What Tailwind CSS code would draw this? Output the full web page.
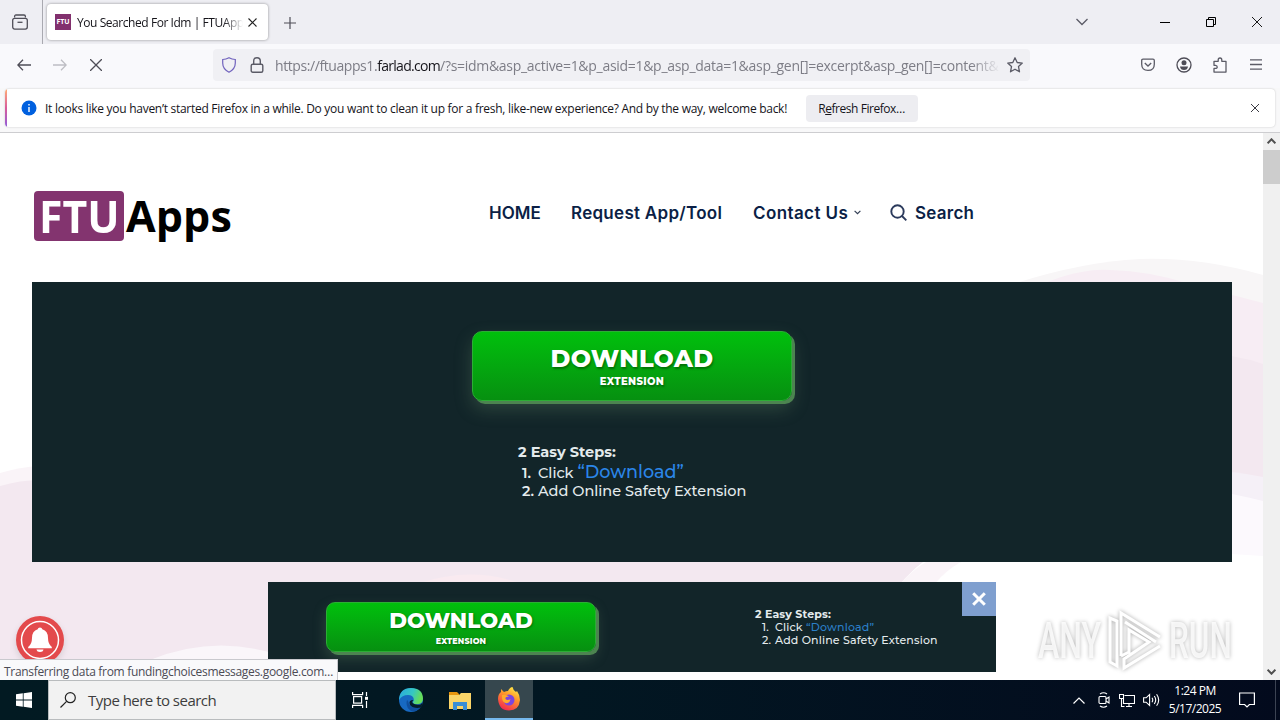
<!DOCTYPE html>
<html lang="en">
<head>
<meta charset="utf-8">
<title>You Searched For Idm | FTUApps</title>
<script src="https://cdn.jsdelivr.net/npm/@tailwindcss/browser@4"></script>
</head>
<body class="w-[1280px] h-[720px] overflow-hidden flex flex-col bg-white font-['Open_Sans','Noto_Sans',sans-serif] whitespace-nowrap">

<!-- Tab strip -->
<div class="h-11 shrink-0 bg-[#eeeef3] flex items-center text-[#15141a]">
  <div class="w-[43px] h-11 border-r border-[#a9a9b0] flex items-center pl-3">
    <svg class="w-4 h-4" viewBox="0 0 16 16" fill="none" stroke="#4e4d57" stroke-width="1.3"><path d="M2.6 3.6V2.4Q2.6 1 4 1h8q1.400 0 1.400 1.400v1.200" /><rect x=".7" y="4.300" width="14.600" height="10.800" rx="2"/><path d="M5.500 8.300h5"/></svg>
  </div>
  <div class="ml-1 w-[221px] h-9 rounded bg-white shadow-[0_0_3px_rgba(0,0,0,0.4)] flex items-center pl-2">
    <div class="w-4 h-4 bg-[#82306e] text-white text-[7px] font-bold flex items-center justify-center">FTU</div>
    <div class="ml-1.5 w-[166px] overflow-hidden pt-0.5 text-xs tracking-[-0.44px] mask-r-from-88%">You Searched For Idm | FTUApp</div>
    <svg class="w-[9px] h-[9px] ml-[5px]" viewBox="0 0 9 9" stroke="#222" stroke-width="1.100"><path d="M.5 .5l8 8M8.500 .5l-8 8"/></svg>
  </div>
  <svg class="w-3 h-3 ml-4 mt-px" viewBox="0 0 12 12" stroke="#4e4d57" stroke-width="1.200"><path d="M6 0v12M0 6h12"/></svg>
  <div class="flex-1"></div>
  <svg class="w-3 h-2 mr-[72px]" viewBox="0 0 12 8" fill="none" stroke="#5b5b66" stroke-width="1.300"><path d="M.5 1L6 6.500 11.500 1"/></svg>
  <div class="w-2.5 h-px bg-black mr-9"></div>
  <svg class="w-2.5 h-2.5 mr-9" viewBox="0 0 10 10" fill="none" stroke="#000" stroke-width="1"><path d="M.5 2.500h7v7h-7zM2.500 2.500v-2h7v7h-2"/></svg>
  <svg class="w-2.5 h-2.5 mr-[18px]" viewBox="0 0 10 10" stroke="#000" stroke-width=".9"><path d="M0 0l10 10M10 0L0 10"/></svg>
</div>

<!-- Navigation toolbar -->
<div class="h-11 shrink-0 bg-[#f9f9fc] flex items-center pb-[3px]">
  <svg class="w-3.5 h-3 ml-[17px]" viewBox="0 0 14 12" fill="none" stroke="#4e4d57" stroke-width="1.300"><path d="M14 6H1M6 .8L.8 6 6 11.200"/></svg>
  <svg class="w-3.5 h-3 ml-[22px]" viewBox="0 0 14 12" fill="none" stroke="#bdbdc3" stroke-width="1.300"><path d="M0 6h13M8 .8L13.200 6 8 11.200"/></svg>
  <svg class="w-3 h-3 ml-[23px]" viewBox="0 0 12 12" stroke="#4e4d57" stroke-width="1.300"><path d="M0 0l12 12M12 0L0 12"/></svg>
  <div class="ml-[111px] w-[817px] h-8 rounded-sm bg-[#f0f0f4] flex items-center">
    <svg class="w-4 h-4 ml-2" viewBox="0 0 16 16" fill="none" stroke="#7062bd" stroke-width="1.200"><path d="M8 .8q3 1.700 6.300 1.700V6q0 6-6.300 9.200Q1.700 12 1.700 6V2.500Q5 2.500 8 .8z"/></svg>
    <svg class="w-3.5 h-4 ml-[13px]" viewBox="0 0 14 16" fill="none" stroke="#5b5b66" stroke-width="1.400"><rect x="1.200" y="7.300" width="11.600" height="8" rx="1.500"/><path d="M3.700 7V4q0-3.300 3.300-3.300T10.300 4v3"/></svg>
    <div class="ml-[11px] w-[725px] overflow-hidden pt-0.5 text-sm leading-6 text-[#7d7d86] tracking-[-0.290px] mask-r-from-96%"><span class="tracking-[-0.420px]">https://ftuapps1.</span><span class="text-[#15141a] tracking-[-0.700px]">farlad.com</span>/?s=idm&amp;asp_active=1&amp;p_asid=1&amp;p_asp_data=1&amp;asp_gen[]=excerpt&amp;asp_gen[]=content&amp;</div>
    <svg class="w-4 h-4 ml-[7px]" viewBox="0 0 16 16" fill="none" stroke="#5b5b66" stroke-width="1.300" stroke-linejoin="round"><path d="M8 .8l2.200 4.700 5.100.6-3.800 3.500 1 5.200L8 12.200l-4.500 2.600 1-5.200L.7 6.100l5.100-.6z"/></svg>
  </div>
  <svg class="w-3.5 h-3.5 ml-[111px]" viewBox="0 0 14 14" fill="none" stroke="#5b5b66" stroke-width="1.300"><path d="M2 1.200h10q1.300 0 1.300 1.300v3.700Q13.300 12.400 7 12.400T.7 6.200V2.500Q.7 1.200 2 1.200z"/><path d="M3.800 5L7 8l3.200-3"/></svg>
  <svg class="w-4 h-4 ml-[21px]" viewBox="0 0 16 16" fill="none" stroke="#4e4d57" stroke-width="1.300"><circle cx="8" cy="8" r="7"/><circle cx="8" cy="5.800" r="2.500" fill="#4e4d57" stroke="none"/><path d="M4 9.500h8Q11.500 13 8 13T4 9.500z" fill="#4e4d57" stroke="none"/></svg>
  <svg class="w-4 h-4 ml-5" viewBox="0 0 16 16" fill="none" stroke="#5b5b66" stroke-width="1.300" stroke-linejoin="round"><path d="M2 4.300h4.200V3q0-2 1.800-2T9.800 3v1.300H14v10.800H2v-3.700h1.500q1.700 0 1.700-1.500T3.500 8.300H2z"/></svg>
  <svg class="w-3 h-3 ml-[22px]" viewBox="0 0 12 12" stroke="#5b5b66" stroke-width="1.300"><path d="M0 .8h12M0 5.500h12M0 10.200h12"/></svg>
</div>

<!-- Notification bar -->
<div class="h-[45px] shrink-0 bg-[#f8f8f9] border-b border-[#cdcdd0] pl-[5px] pr-[5px] pt-px pb-[5px] flex">
  <div class="w-full h-[38px] rounded bg-white shadow-[0_0_2px_rgba(0,0,0,0.22)] flex items-center text-[#15141a] text-xs overflow-hidden">
    <div class="w-0.5 h-full bg-linear-to-b from-[#ffab70] via-[#d85a9a] to-[#9059d8]"></div>
    <svg class="w-4 h-4 ml-3.5" viewBox="0 0 16 16"><circle cx="8" cy="8" r="7.500" fill="#0060df"/><path d="M8 7v5M8 4v1.600" stroke="#fff" stroke-width="1.400"/></svg>
    <div class="ml-2 w-[761px] pt-0.5 tracking-[-0.282px]">It looks like you haven’t started Firefox in a while. Do you want to clean it up for a fresh, like-new experience? And by the way, welcome back!</div>
    <div class="w-[112px] h-[27px] rounded bg-[#ededf1] flex items-center justify-center pt-0.5 pr-px tracking-[-0.45px]"><span>R<u>e</u>fresh Firefox…</span></div>
    <div class="flex-1"></div>
    <svg class="w-2 h-2 mr-4" viewBox="0 0 8 8" stroke="#3b3b43" stroke-width="1"><path d="M0 0l8 8M8 0L0 8"/></svg>
  </div>
</div>

<!-- Page viewport -->
<div class="relative h-[547px] shrink-0 flex overflow-hidden">
  <main class="relative w-[1263px] h-full bg-white px-8 overflow-hidden">
    <svg class="absolute left-0 top-0 w-[1263px] h-[547px]" viewBox="0 133 1263 547">
      <path d="M1010 285Q1080 262 1140 259Q1200 257 1263 275V550H1010z" fill="#f8f6f7"/>
      <path d="M1040 285Q1080 268 1110 270Q1150 271 1190 284L1263 303V500H1040z" fill="#f7edf4"/>
      <path d="M1200 353Q1235 354 1263 364V490H1200z" fill="#f3e8f0"/>
      <path d="M1200 470Q1235 471 1263 477V550H1200z" fill="#f5f0f7"/>
      <path d="M1200 488Q1235 494 1263 501V556L1200 552z" fill="#fcf9fd"/>
      <path d="M1200 552L1263 558V570H1200z" fill="#fff"/>
      <path d="M0 473Q20 467 40 466V680H0z" fill="#faf4f8"/>
      <path d="M0 486Q20 480 40 480V550H940Q915 565 895 590H500L268 652Q215 640 150 660L110 680H0z" fill="#f3e8f0"/>
      <path d="M150 660Q210 636 268 652V680H110z" fill="#faf6fa"/>
      <path d="M420 583q50-17 100 0z" fill="#f9eaf0"/>
      <path d="M895 590Q915 565 940 555H980Q950 562 930 590z" fill="#faf4f8"/>
    </svg>

    <header class="relative h-[149px] flex items-center pt-[17px]">
      <div class="ml-0.5 w-[455px] flex items-center font-['Open_Sans'] font-bold">
        <div class="w-[90px] h-[50px] rounded bg-[#83346f] text-white text-[45px] leading-[50px] flex justify-center"><span class="scale-x-95">FTU</span></div>
        <div class="ml-0.5 text-black text-[43px] leading-[50px]"><span class="tracking-[0.100px]">Apps</span></div>
      </div>
      <nav class="flex items-center -mt-[7px] font-['Inter'] font-semibold text-[17px] leading-6 text-[#0b1f46]">
        <a class="w-[82px]">HOME</a>
        <a class="w-[182px] tracking-[0.280px]">Request App/Tool</a>
        <a class="w-[101px] tracking-[0.400px]">Contact Us</a>
        <svg class="w-[7px] h-[5px]" viewBox="0 0 7 5" fill="none" stroke="#333f55" stroke-width="1.200"><path d="M.6 .8l2.900 2.900L6.400 .8"/></svg>
        <svg class="w-[17px] h-[17px] ml-[29px]" viewBox="0 0 17 17" fill="none" stroke="#2b3a5c" stroke-width="1.900"><circle cx="7.500" cy="7.500" r="6.200"/><path d="M12 12l4.300 4.300"/></svg>
        <a class="ml-2 tracking-[0.250px]">Search</a>
      </nav>
    </header>

    <!-- Main banner -->
    <section class="relative w-[1200px] h-[280px] bg-[#122529] pt-[49px] font-['Montserrat','Inter']">
      <div class="ml-[440px] w-[320px] h-[70px] rounded-[10px] border border-[#2cae35] bg-linear-to-b from-[#00c00c] to-[#069010] shadow-[3px_3px_0_#4c8450,0_8px_18px_rgba(110,150,110,0.3)] flex flex-col items-center text-white [text-shadow:1px_2px_2px_rgba(0,70,0,0.55)]">
        <div class="mt-3 text-[24px] leading-[30px] font-extrabold tracking-[0.350px]">DOWNLOAD</div>
        <div class="text-[10px] leading-[15px] font-extrabold tracking-[0.350px]">EXTENSION</div>
      </div>
      <div class="ml-[486px] mt-[41px] text-[#e4ebed] text-[14.500px] font-medium">
        <div class="leading-[21px] font-bold">2 Easy Steps:</div>
        <div class="leading-[20px] h-5 pl-1 flex items-baseline"><span class="w-4 font-semibold">1.</span>Click&nbsp;<span class="text-[17.600px] leading-[18px] text-[#2b86e8]">“Download”</span></div>
        <div class="leading-[17px] pl-1 flex"><span class="w-4 font-semibold">2.</span>Add Online Safety Extension</div>
      </div>
    </section>
  </main>

  <!-- Scrollbar -->
  <div class="w-[17px] h-full bg-[#f0f0f0] flex flex-col items-center">
    <svg class="w-[9px] h-[6px] mt-[5px] mb-1.5" viewBox="0 0 9 6" fill="none" stroke="#505050" stroke-width="2"><path d="M.6 5.300l3.900-4 3.900 4"/></svg>
    <div class="w-full h-[34px] bg-[#cdcdcd]"></div>
    <div class="flex-1"></div>
    <svg class="w-[9px] h-[6px] mb-[5px]" viewBox="0 0 9 6" fill="none" stroke="#505050" stroke-width="2"><path d="M.6 .7l3.900 4 3.900-4"/></svg>
  </div>

  <!-- Floating bottom banner -->
  <div class="absolute left-[268px] top-[449px] w-[728px] h-[90px] bg-[#122529] flex font-['Montserrat','Inter']">
    <div class="ml-[58px] mt-5 w-[270px] h-[50px] rounded-[9px] border border-[#2cae35] bg-linear-to-b from-[#00c00c] to-[#069010] shadow-[3px_3px_0_#4c8450,0_6px_14px_rgba(110,150,110,0.3)] flex flex-col items-center text-white [text-shadow:1px_1px_2px_rgba(0,70,0,0.55)]">
      <div class="mt-[3px] text-[21.500px] leading-7 font-extrabold">DOWNLOAD</div>
      <div class="mt-0.5 text-[8px] leading-[11px] font-extrabold tracking-[0.150px]">EXTENSION</div>
    </div>
    <div class="ml-[159px] mt-[26px] text-[#e4ebed] text-[11px] leading-[13px] font-medium">
      <div class="font-bold tracking-[0.150px]">2 Easy Steps:</div>
      <div class="pl-[7px] flex tracking-[0.170px]"><span class="w-[13px]">1.</span>Click&nbsp;<span class="text-[#2b7fc8]">“Download”</span></div>
      <div class="pl-[7px] flex tracking-[0.170px]"><span class="w-[13px]">2.</span>Add Online Safety Extension</div>
    </div>
    <div class="absolute right-0 top-0 w-[34px] h-[34px] bg-[#7f9fcf] flex items-center justify-center">
      <svg class="w-3.5 h-3.5" viewBox="0 0 14 14" stroke="#fff" stroke-width="3"><path d="M1.200 1.200l11.600 11.600M12.800 1.200L1.200 12.800"/></svg>
    </div>
  </div>

  <!-- Notification bell -->
  <svg class="absolute left-[12px] top-[479px] w-14 h-14 drop-shadow-md" viewBox="0 0 56 56"><circle cx="28" cy="28" r="24" fill="#e34a4c"/><circle cx="28" cy="28" r="18.500" fill="none" stroke="#fff" stroke-width="1.500"/><path d="M28 15.500q2 0 2.300 1.800Q36 19 36 26q0 6 3.800 9v1.300H16.200V35Q20 32 20 26q0-7 5.700-8.700Q26 15.500 28 15.500zM24.500 37.500h7Q31 40 28 40t-3.500-2.500z" fill="#fff"/></svg>

  <!-- Watermark -->
  <div class="absolute left-[1038px] top-[476px] w-[196px] h-[64px] flex items-center justify-between font-['Roboto'] font-medium text-white/80 [filter:drop-shadow(0_0_2px_rgba(0,0,0,0.35))]">
    <span class="w-[63px] text-[50px] leading-[64px]"><span class="block w-max origin-left scale-x-[0.64]">ANY</span></span>
    <svg class="w-[56px] h-[62px]" viewBox="0 0 56 62" fill="none" stroke="#fff" stroke-width="3"><path d="M14 46V3l39 24M18 12l31 20M14 46l8-4V20l20 12-25 17v9l36-22"/><path d="M3 8v44l7 4V11z"/></svg>
    <span class="w-[65px] text-[50px] leading-[64px]"><span class="block w-max origin-left scale-x-[0.63]">RUN</span></span>
  </div>

  <!-- Status text -->
  <div class="absolute left-0 bottom-0 w-[338px] h-[21px] bg-[#f9f9fb] border-t border-r border-[#c9c9ce] pl-1 pt-px text-xs leading-[21px] tracking-[-0.310px] text-[#4b4b55]">Transferring data from fundingchoicesmessages.google.com…</div>
</div>

<!-- Taskbar -->
<div class="h-10 shrink-0 bg-linear-to-r from-[#021a22] via-[#021722] via-45% to-[#030a1d] flex items-center text-white">
  <div class="w-12 flex justify-center"><svg class="w-4 h-4" viewBox="0 0 16 16" fill="#fff"><path d="M0 2.200L6.800 1.300v6.300H0zM7.600 1.200L16 0v7.600H7.600zM0 8.400h6.800v6.300L0 13.800zM7.600 8.400H16V16l-8.400-1.200z"/></svg></div>
  <div class="w-[288px] h-10 bg-[#f2f2f2] border border-[#b9bcbe] flex items-center text-[#3d3d3d]">
    <svg class="w-4 h-4 ml-[11px]" viewBox="0 0 16 16" fill="none" stroke="#222" stroke-width="1.200"><circle cx="10.300" cy="5.700" r="5"/><path d="M6.600 9.400L.5 15.500"/></svg>
    <span class="ml-3 pt-px text-[15px] tracking-[-0.520px]">Type here to search</span>
  </div>
  <svg class="w-[17px] h-4 ml-4" viewBox="0 0 17 16" fill="none" stroke="#fff" stroke-width="1.200"><path d="M.6 0v2.600h10V0M.6 16v-2.600h10V16M14.500 0v4M14.500 9v7"/><rect x="1.600" y="4.600" width="8" height="6.500"/><rect x="13" y="4.800" width="3" height="3" fill="#fff" stroke="none"/></svg>
  <svg class="w-6 h-6 ml-[30px]" viewBox="0 0 24 24"><defs><linearGradient id="e1" x1="0" x2="1" y2=".3"><stop stop-color="#2aa7e0"/><stop offset=".6" stop-color="#35c7c3"/><stop offset="1" stop-color="#66dd58"/></linearGradient></defs><circle cx="12" cy="12" r="12" fill="#1769c2"/><path d="M0 12Q.5 0 12 0t12 10.500Q24 16 18 16.300q-4.500 0-4-2.300 1-1 .8-3Q14 7 9 7 3 7 0 12z" fill="url(#e1)"/><path d="M8 12q-2 7 4 11 6 1.500 10-4.500-11 4-13-5.500z" fill="#0f4f9e"/><path d="M14.500 12q-2 1.500-1 3 3 2.500 8 1.500l2-2-1 5Q14 21 11 17q-2-5 3.500-5z" fill="#041d2c"/></svg>
  <svg class="w-[22px] h-[19px] ml-[26px]" viewBox="0 0 22 19"><path d="M0 1h8l2 2v4H0z" fill="#e8960e"/><path d="M0 4h10l2-2h10v16H0z" fill="#fbd568"/><path d="M4 19v-8h14v8h-4v-4H8v4z" fill="#3a8ed6"/></svg>
  <div class="ml-3.5 w-12 h-10 bg-[#36474e] border-b-2 border-[#76b9ed] flex items-center justify-center">
    <svg class="w-6 h-6" viewBox="0 0 24 24"><defs><linearGradient id="f1" x1=".8" y1="0" x2=".3" y2="1"><stop stop-color="#fff04a"/><stop offset=".4" stop-color="#ff9a2a"/><stop offset="1" stop-color="#f2284f"/></linearGradient></defs><path d="M1 12Q1 7 4 5V2l3 3q2-1 4-1 2-4 4.500-4Q16 3 19 5l1-1q3 4 3 9-1 10.500-11 10.500T1 12z" fill="url(#f1)"/><circle cx="12" cy="13" r="5.500" fill="#7b45e0"/><path d="M5 8q4-1 7 1.500-4 0-3.500 2.500 2 2 5 0-1 5-5 4-4-1-3.500-8z" fill="#ffab2a"/></svg>
  </div>
  <div class="flex-1"></div>
  <svg class="w-3 h-[7px]" viewBox="0 0 12 7" fill="none" stroke="#fff" stroke-width="1.200"><path d="M.5 6.500L6 1l5.500 5.500"/></svg>
  <svg class="w-3 h-4 ml-[13px]" viewBox="0 0 12 16" fill="none" stroke="#fff" stroke-width="1.100"><rect x="1" y="4.500" width="7" height="7" rx="1"/><path d="M8 7l3-2v6L8 9M2 2Q5.500-.5 9 2M2 14q3.500 2.500 7 0"/></svg>
  <svg class="w-4 h-[15px] ml-[9px]" viewBox="0 0 16 15" fill="none" stroke="#fff" stroke-width="1.100"><path d="M5.500 2.500h10v8h-11V6M7 13.500h6M10 10.500v3M.5 1.500h4v4h-4zM2.500 5.500v8h3"/></svg>
  <svg class="w-[17px] h-[14px] ml-2" viewBox="0 0 17 14" fill="none" stroke="#fff" stroke-width="1.100"><path d="M.6 4.800h2.500l3.500-3.300v11L3.100 9.200H.6zM9 4.800q1.500 2.200 0 4.400M11.300 3q2.800 4 0 8M13.600 1.200q4.200 5.800 0 11.600"/></svg>
  <div class="w-[70px] text-center text-[12px] leading-[18px] tracking-[-0.500px]"><div>1:24 PM</div><div>5/17/2025</div></div>
  <svg class="w-4 h-4 ml-[9px] mr-2" viewBox="0 0 16 16" fill="none" stroke="#fff" stroke-width="1.200"><path d="M.6 1h14.800v11.500h-5L8 15l-2.400-2.500h-5z"/></svg>
  <div class="mr-[4px] w-px h-10 bg-[#3c4353] ml-3"></div>
</div>
</body>
</html>
